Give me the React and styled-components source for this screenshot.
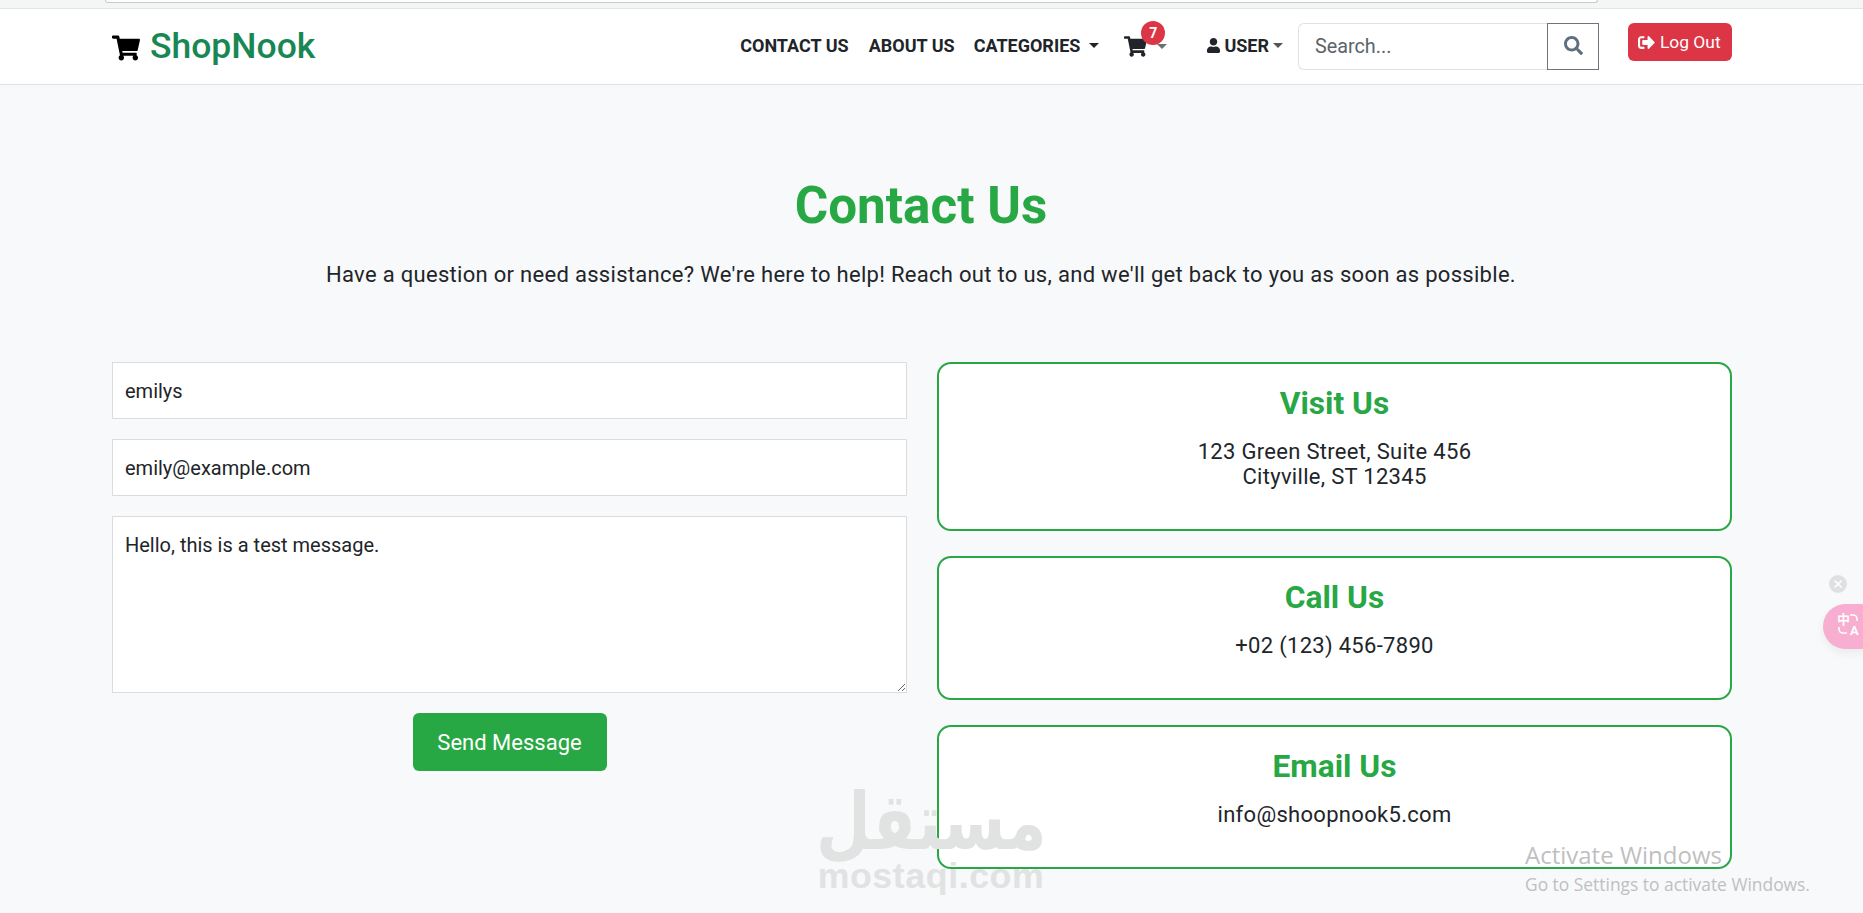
import React from "react";
import styled, { createGlobalStyle } from "styled-components";
import { FaShoppingCart, FaUser, FaSearch, FaSignOutAlt } from "react-icons/fa";

const Global = createGlobalStyle`
  html, body { margin: 0; padding: 0; background: #f8f9fa; }
  body { font-family: Roboto, "Liberation Sans", sans-serif; color: #212529; }
  * { box-sizing: border-box; }
`;

const Page = styled.div`
  position: relative;
  width: 1863px;
  height: 913px;
  overflow: hidden;
  background: #f8f9fa;
`;
const BrowserStrip = styled.div`
  height: 9px;
  background: #f4f5f5;
  padding: 0 265px 0 105px;
  border-bottom: 1px solid #e3e4e5;
`;
const UrlBarEdge = styled.div`
  height: 3px;
  background: #fff;
  border: 1px solid #c9cacb;
  border-top: 0;
  border-radius: 0 0 10px 10px;
`;
const Nav = styled.nav`
  height: 76px;
  background: #fff;
  border-bottom: 1px solid #dee2e6;
  padding: 0 131px 0 112px;
  display: flex;
  align-items: flex-start;
`;
const Brand = styled.a`
  display: flex;
  align-items: center;
  gap: 10px;
  height: 60px;
  margin-top: 7px;
  font-size: 35.5px;
  font-weight: 500;
  color: #198754;
  svg { color: #000; font-size: 28px; margin-top: 4px; }
`;
const NavRight = styled.div`
  margin-left: auto;
  display: flex;
  align-items: flex-start;
`;
const NavLink = styled.a`
  display: flex;
  align-items: center;
  height: 22px;
  margin-top: 25px;
  margin-left: ${(p) => p.$ml || 0}px;
  font-size: 18px;
  font-weight: 700;
  text-transform: uppercase;
  color: #212529;
  white-space: nowrap;
`;
const Caret = styled.span`
  display: inline-block;
  width: 0;
  height: 0;
  margin-left: ${(p) => p.$ml || 8}px;
  border-top: 5px solid ${(p) => p.$color || "#212529"};
  border-left: 5px solid transparent;
  border-right: 5px solid transparent;
`;
const CartWrap = styled.a`
  position: relative;
  display: flex;
  align-items: center;
  height: 22px;
  margin-top: 26px;
  margin-left: 25px;
  width: 82px;
  color: #212529;
  font-size: 23px;
`;
const Badge = styled.span`
  position: absolute;
  left: 17px;
  top: -14px;
  width: 24px;
  height: 24px;
  border-radius: 50%;
  background: #dc3545;
  color: #fff;
  font-size: 14px;
  font-weight: 700;
  display: flex;
  align-items: center;
  justify-content: center;
`;
const UserIcon = styled(FaUser)`
  font-size: 15px;
  margin-right: 3px;
`;
const Search = styled.form`
  display: flex;
  width: 301px;
  height: 47px;
  margin: 14px 0 0 15px;
`;
const SearchInput = styled.input`
  flex: 1;
  min-width: 0;
  border: 1px solid #dee2e6;
  border-right: 0;
  border-radius: 6px 0 0 6px;
  padding: 0 16px;
  font: 400 19.8px Roboto, sans-serif;
  color: #212529;
  background: #fff;
  outline: none;
  &::placeholder { color: #5c636a; opacity: 1; }
`;
const SearchButton = styled.button`
  width: 52px;
  border: 1px solid #6c757d;
  background: #fff;
  color: #5f7080;
  font-size: 19px;
  padding: 3px 0 0;
`;
const LogoutButton = styled.button`
  display: flex;
  align-items: center;
  gap: 5px;
  width: 104px;
  height: 38px;
  margin: 14px 0 0 29px;
  padding: 0 0 0 10px;
  border: 0;
  border-radius: 6px;
  background: #dc3545;
  color: #fff;
  font: 400 17.4px Roboto, sans-serif;
  white-space: nowrap;
  svg { font-size: 17px; }
`;

const Hero = styled.header`
  width: 1618px;
  margin-left: 112px;
  text-align: center;
  padding-top: 90px;
`;
const Title = styled.h1`
  margin: 0;
  font-size: 51.2px;
  line-height: 62px;
  font-weight: 700;
  color: #28a745;
`;
const Lead = styled.p`
  margin: 23px 0 0;
  font-size: 22px;
  line-height: 30px;
  color: #212529;
  letter-spacing: 0.3px;
`;
const Columns = styled.main`
  display: grid;
  grid-template-columns: 795px 795px;
  column-gap: 30px;
  padding: 0 0 0 112px;
  margin-top: 72px;
`;
const FormCol = styled.form`
  display: flex;
  flex-direction: column;
  gap: 20px;
`;
const Field = styled.input`
  display: block;
  width: 100%;
  height: 57px;
  padding: 0 12px;
  border: 1px solid #dcdcdc;
  border-radius: 0;
  background: #fff;
  font: 400 20px Roboto, sans-serif;
  color: #212529;
  outline: none;
`;
const Area = styled.textarea`
  display: block;
  width: 100%;
  height: 177px;
  padding: 13px 12px;
  border: 1px solid #dcdcdc;
  border-radius: 0;
  background: #fff;
  font: 400 20px/1.5 Roboto, sans-serif;
  color: #212529;
  outline: none;
  resize: vertical;
`;
const Send = styled.button`
  align-self: center;
  width: 194px;
  height: 58px;
  border: 0;
  border-radius: 6px;
  background: #28a745;
  color: #fff;
  font: 400 22px Roboto, sans-serif;
`;
const InfoCol = styled.section`
  display: flex;
  flex-direction: column;
  gap: 25px;
`;
const Card = styled.article`
  height: ${(p) => p.$h}px;
  padding-top: 21px;
  border: 2px solid #28a745;
  border-radius: 14px;
  background: #fff;
  text-align: center;
`;
const CardTitle = styled.h3`
  margin: 0 0 16px;
  font-size: 31.7px;
  line-height: 38px;
  font-weight: 700;
  color: #28a745;
`;
const CardText = styled.p`
  margin: 0;
  font-size: 22px;
  line-height: 25px;
  color: #212529;
  letter-spacing: 0.3px;
`;
const Watermark = styled.div`
  position: absolute;
  left: 816px;
  top: 788px;
  width: 230px;
  color: #e1e2e2;
  text-align: center;
  pointer-events: none;
`;
const WatermarkArabic = styled.div`
  font: 700 63px/70px "DejaVu Sans", sans-serif;
  white-space: nowrap;
  transform: scaleY(1.25);
`;
const WatermarkLatin = styled.div`
  font: 700 35.7px/36px "Liberation Sans", sans-serif;
  letter-spacing: 0.6px;
`;
const ActivateNotice = styled.div`
  position: absolute;
  left: 1525px;
  top: 839px;
  font-family: "Open Sans", sans-serif;
  color: #bfc0c1;
  pointer-events: none;
`;
const ActivateTitle = styled.div`
  font-size: 24px;
  line-height: 32px;
`;
const ActivateSub = styled.div`
  font-size: 17.4px;
  line-height: 26px;
`;
const WidgetClose = styled.div`
  position: absolute;
  left: 1829px;
  top: 575px;
  width: 18px;
  height: 18px;
  border-radius: 50%;
  background: #dfe0e1;
  display: flex;
  align-items: center;
  justify-content: center;
`;
const TranslatePill = styled.div`
  position: absolute;
  left: 1823px;
  top: 604px;
  width: 60px;
  height: 45px;
  border-radius: 23px;
  background: #f7aed0;
  box-shadow: 0 4px 10px rgba(0, 0, 0, 0.06);
  padding: 8px 0 0 14px;
  color: #fff;
  font: 700 13px/13px "Noto Sans CJK SC", sans-serif;
`;
const PillA = styled.span`
  position: absolute;
  left: 27px;
  top: 20px;
  font: 700 13px/13px Roboto, sans-serif;
`;
const PillBrackets = styled.svg`
  position: absolute;
  left: 14px;
  top: 8px;
`;

const Cart = () => <FaShoppingCart />;

export default function App() {
  return (
    <Page>
      <Global />
      <BrowserStrip><UrlBarEdge /></BrowserStrip>
      <Nav>
        <Brand><Cart /> ShopNook</Brand>
        <NavRight>
          <NavLink>Contact Us</NavLink>
          <NavLink $ml={20}>About Us</NavLink>
          <NavLink $ml={19}>Categories<Caret $ml={9} /></NavLink>
          <CartWrap>
            <Cart />
            <Badge>7</Badge>
            <Caret $ml={10} $color="#6c6f72" />
          </CartWrap>
          <NavLink><UserIcon />User<Caret $ml={4} $color="#555" /></NavLink>
          <Search>
            <SearchInput placeholder="Search..." />
            <SearchButton type="button"><FaSearch /></SearchButton>
          </Search>
          <LogoutButton type="button"><FaSignOutAlt />Log Out</LogoutButton>
        </NavRight>
      </Nav>
      <Hero>
        <Title>Contact Us</Title>
        <Lead>Have a question or need assistance? We're here to help! Reach out to us, and we'll get back to you as soon as possible.</Lead>
      </Hero>
      <Columns>
        <FormCol>
          <Field readOnly value="emilys" />
          <Field readOnly value="emily@example.com" />
          <Area readOnly value="Hello, this is a test message." />
          <Send type="button">Send Message</Send>
        </FormCol>
        <InfoCol>
          <Card $h={169}>
            <CardTitle>Visit Us</CardTitle>
            <CardText>123 Green Street, Suite 456<br />Cityville, ST 12345</CardText>
          </Card>
          <Card $h={144}>
            <CardTitle>Call Us</CardTitle>
            <CardText>+02 (123) 456-7890</CardText>
          </Card>
          <Card $h={144}>
            <CardTitle>Email Us</CardTitle>
            <CardText>info@shoopnook5.com</CardText>
          </Card>
        </InfoCol>
      </Columns>
      <Watermark>
        <WatermarkArabic>مستقل</WatermarkArabic>
        <WatermarkLatin>mostaqi.com</WatermarkLatin>
      </Watermark>
      <ActivateNotice>
        <ActivateTitle>Activate Windows</ActivateTitle>
        <ActivateSub>Go to Settings to activate Windows.</ActivateSub>
      </ActivateNotice>
      <WidgetClose>
        <svg width="10" height="10" viewBox="0 0 10 10" stroke="#fff" strokeWidth="1.6"><path d="M1.5 1.5l7 7M8.5 1.5l-7 7" /></svg>
      </WidgetClose>
      <TranslatePill>
        中
        <PillBrackets width="24" height="24" viewBox="0 0 24 24" fill="none" stroke="#fff" strokeWidth="1.6">
          <path d="M13 3h3a4 4 0 0 1 4 4v2M2 15v2a4 4 0 0 0 4 4h4" />
        </PillBrackets>
        <PillA>A</PillA>
      </TranslatePill>
    </Page>
  );
}
